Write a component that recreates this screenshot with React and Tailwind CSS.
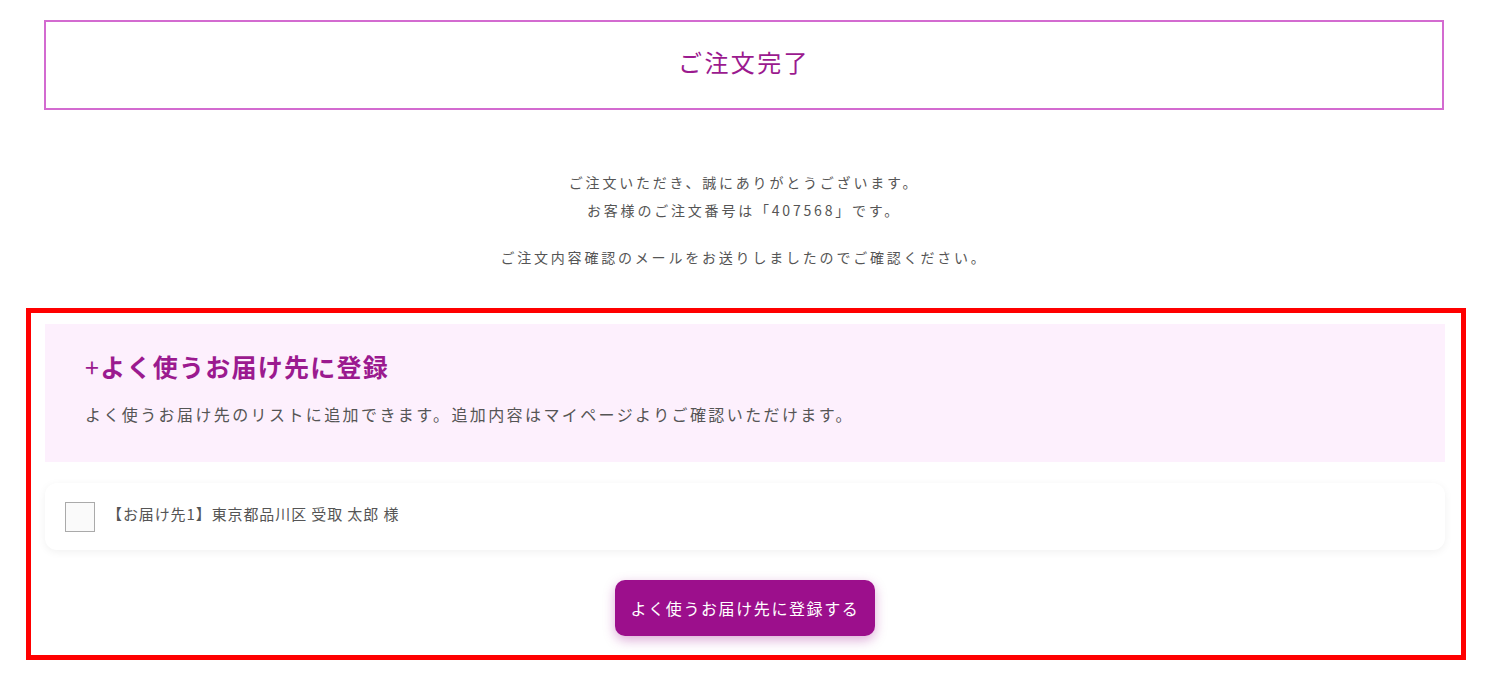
const FONT = { fontFamily: '"Noto Sans CJK JP", "Noto Sans", sans-serif' }

export default function App() {
  return (
    <div className="bg-white min-h-[687px] text-[#555]" style={FONT}>
      <div className="pt-5 px-[44px]">
        <div className="w-[1400px] h-[90px] border-2 border-[#d36bd0] flex items-center justify-center pb-1.5">
          <h1 className="text-[24px] tracking-[0.1em] text-[#9b1a8f] font-normal">ご注文完了</h1>
        </div>
      </div>

      <div className="mt-[58px] text-center text-[14px] leading-[28px] tracking-[0.2em]">
        <p>ご注文いただき、誠にありがとうございます。</p>
        <p>お客様のご注文番号は「407568」です。</p>
        <p className="mt-[19px]">ご注文内容確認のメールをお送りしましたのでご確認ください。</p>
      </div>

      <div className="mt-[37px] ml-[26px] w-[1440px] h-[352px] border-[5px] border-[#ff0000] pt-[11px] pl-[14px]">
        <div className="w-[1400px] h-[138px] bg-[#fdf0fd] pl-10 pt-[26px]">
          <h2 className="text-[25px] font-bold text-[#9b1a8f] tracking-[0.05em] leading-[32px]">
            <span className="font-normal">+</span>よく使うお届け先に登録
          </h2>
          <p className="mt-[20px] text-[16px] tracking-[0.15em] leading-[24px]">
            よく使うお届け先のリストに追加できます。追加内容はマイページよりご確認いただけます。
          </p>
        </div>

        <div className="mt-[21px] w-[1400px] h-[67px] bg-white rounded-xl shadow-[0_2px_8px_rgba(0,0,0,0.06)] flex items-center pl-5 gap-3">
          <span className="w-[30px] h-[30px] border border-[#aaa] bg-[#fafafa]" />
          <span className="text-[15px] tracking-[0.06em] pb-1">【お届け先1】東京都品川区 受取 太郎 様</span>
        </div>

        <div className="mt-[30px] flex justify-center w-[1400px]">
          <button className="h-[56px] px-4 rounded-[10px] bg-[#9c0f8c] text-white text-[16px] tracking-[0.1em] shadow-[0_4px_12px_rgba(156,15,140,0.35)]">
            よく使うお届け先に登録する
          </button>
        </div>
      </div>
    </div>
  )
}
